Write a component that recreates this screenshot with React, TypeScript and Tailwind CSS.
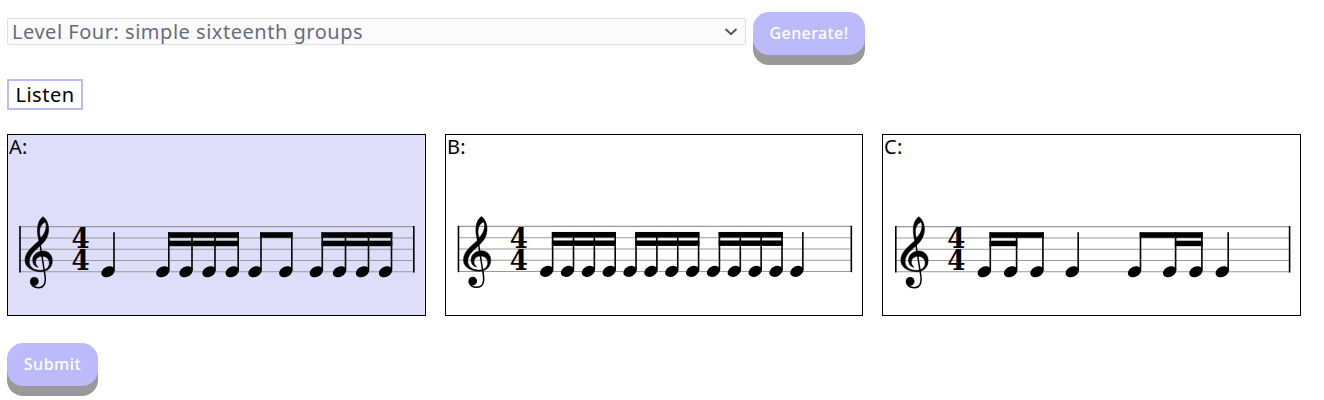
import React from "react";

type Group = { stems: number[]; second?: [number, number] };
type Measure = { label: string; selected?: boolean; shift: number; groups: Group[] };

const measures: Measure[] = [
  {
    label: "A:",
    selected: true,
    shift: 0,
    groups: [
      { stems: [114] },
      { stems: [168.8, 192, 215, 238.2], second: [0, 3] },
      { stems: [261, 291.8] },
      { stems: [322.3, 345.5, 368.5, 391.5], second: [0, 3] },
    ],
  },
  {
    label: "B:",
    shift: 0.5,
    groups: [
      { stems: [114.4, 135.3, 156.2, 177.1], second: [0, 3] },
      { stems: [198, 218.9, 239.8, 260.7], second: [0, 3] },
      { stems: [281.6, 302.5, 323.4, 344.3], second: [0, 3] },
      { stems: [365.2] },
    ],
  },
  {
    label: "C:",
    shift: 0.8,
    groups: [
      { stems: [114.5, 140.8, 167.1], second: [0, 1] },
      { stems: [202.4] },
      { stems: [264.7, 299.8, 326.1], second: [1, 2] },
      { stems: [352.4] },
    ],
  },
];

const staffLines = [226.6, 238, 249.3, 260.5, 271.8];

function TrebleClef() {
  return (
    <g transform="translate(0 205) scale(0.33333)">
      <path
        fillRule="evenodd"
        stroke="#000"
        strokeWidth="1.5"
        d="M117 107C90 130 75 145 75 166C75 187 97 200 122 200C143 200 157 187 157 167C157 149 145 138 129 138C111 138 98 150 98 165C98 177 104 185 115 187C108 181 106 175 107 169C108 160 116 154 127 154C140 154 148 163 148 174C148 188 138 196 121 196C103 196 88 187 88 170C88 152 100 141 119 124C132 112 146 98 146 72C146 58 140 42 129 35C112 47 108 75 117 107ZM122 99C115 78 119 60 135 51C139 56 139 64 138 69C136 82 129 92 122 99Z"
      />
      <path d="M118 103L134 205C139 232 134 248 115 248C104 248 95 242 92 232" fill="none" stroke="#000" strokeWidth="4.5" />
      <circle cx="103" cy="229" r="13" />
    </g>
  );
}

function Staff({ groups, shift }: { groups: Group[]; shift: number }) {
  return (
    <svg viewBox="8 135 417 180" preserveAspectRatio="xMinYMin meet" className="absolute inset-0 h-full w-full">
      <g transform={`translate(${shift} 0)`}>
        {staffLines.map((y) => (
          <line key={y} x1="20" x2="414" y1={y} y2={y} stroke="#999" strokeWidth="1.1" />
        ))}
        <rect x="19.2" y="226" width="1.6" height="46.5" />
        <rect x="413" y="226" width="1.6" height="46.5" />
        <TrebleClef />
        {[247.8, 270.2].map((y) => (
          <text
            key={y}
            transform={`translate(80.5 ${y}) scale(0.95 1)`}
            textAnchor="middle"
            fontSize="27.5"
            fontWeight="700"
            className="font-['DejaVu_Serif',serif]"
          >
            4
          </text>
        ))}
        {groups.map((g, i) => {
          const last = g.stems[g.stems.length - 1];
          return (
            <g key={i}>
              {g.stems.map((x) => (
                <g key={x}>
                  <rect x={x - 0.8} y="232.2" width="1.6" height="38.5" />
                  <ellipse cx={x - 6} cy="271.7" rx="7" ry="5.1" transform={`rotate(-27 ${x - 6} 271.7)`} />
                </g>
              ))}
              {g.stems.length > 1 && (
                <rect x={g.stems[0] - 0.8} y="232.2" width={last - g.stems[0] + 1.6} height="5.6" />
              )}
              {g.second && (
                <rect
                  x={g.stems[g.second[0]] - 0.8}
                  y="240.7"
                  width={g.stems[g.second[1]] - g.stems[g.second[0]] + 1.6}
                  height="5.5"
                />
              )}
            </g>
          );
        })}
      </g>
    </svg>
  );
}

export default function App() {
  return (
    <main className="h-[400px] overflow-hidden bg-white pt-3 pl-[7px] font-['Noto_Sans',sans-serif] text-black">
      <div className="flex h-[53px] items-start gap-[7px]">
        <div className="mt-1.5 flex h-[27px] w-[739px] items-center justify-between rounded-[2px] border border-[#dedede] bg-[#fbfbfb] pr-[7px] pl-1 text-[#666b82]">
          <span className="text-[20px] leading-[25px] tracking-[0.52px] whitespace-nowrap">Level Four: simple sixteenth groups</span>
          <svg width="14" height="10" viewBox="0 0 14 10" fill="none" stroke="#4f546c" strokeWidth="2">
            <path d="M1.5 2L7 7.2L12.5 2" />
          </svg>
        </div>
        <button className="h-[43px] w-[112px] rounded-[16px] bg-[#bbbafb] pb-0.5 text-[16px] font-medium tracking-[0.4px] text-white shadow-[0_10px_0_#999]">
          Generate!
        </button>
      </div>

      <button className="mt-[14px] flex h-[31px] w-[76px] items-center justify-center border-2 border-[#bbbafb] bg-white text-[20px] leading-[25px] tracking-[0.5px]">
        Listen
      </button>

      <div className="mt-6 grid w-[1294px] grid-cols-[419px_418px_419px] gap-x-[19px]">
        {measures.map((m) => (
          <section
            key={m.label}
            className={
              m.selected
                ? "relative h-[182px] border border-black bg-[#dedefa]"
                : "relative h-[182px] border border-black bg-white"
            }
          >
            <div className="pl-px text-[20px] leading-[24px] tracking-[0.3px]">{m.label}</div>
            <Staff groups={m.groups} shift={m.shift} />
          </section>
        ))}
      </div>

      <button className="mt-[27px] h-[43px] w-[91px] rounded-[16px] bg-[#bbbafb] pb-0.5 text-[16px] font-medium tracking-[0.5px] text-white shadow-[0_10px_0_#999]">
        Submit
      </button>
    </main>
  );
}
